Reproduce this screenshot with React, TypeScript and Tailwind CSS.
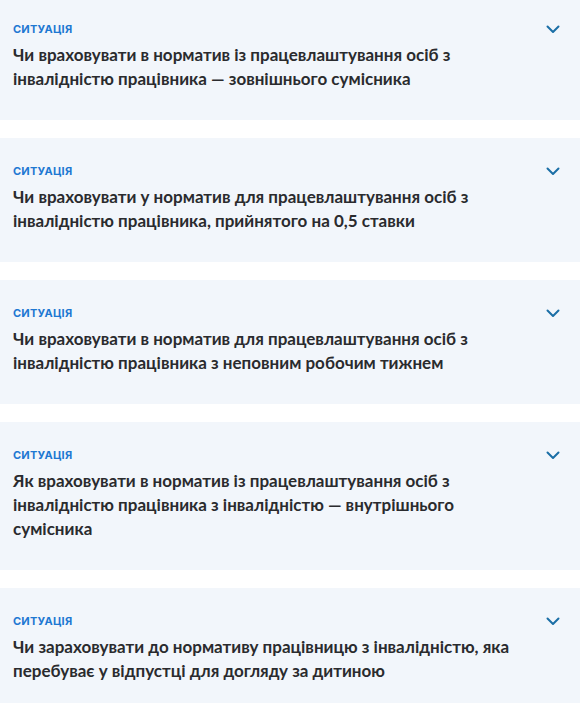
import React from 'react';

const ITEMS = [
  'Чи враховувати в норматив із працевлаштування осіб з інвалідністю працівника — зовнішнього сумісника',
  'Чи враховувати у норматив для працевлаштування осіб з інвалідністю працівника, прийнятого на 0,5 ставки',
  'Чи враховувати в норматив для працевлаштування осіб з інвалідністю працівника з неповним робочим тижнем',
  'Як враховувати в норматив із працевлаштування осіб з інвалідністю працівника з інвалідністю — внутрішнього сумісника',
  'Чи зараховувати до нормативу працівницю з інвалідністю, яка перебуває у відпустці для догляду за дитиною',
];

const Chevron = () => (
  <svg width="14" height="9" viewBox="0 0 14 9" fill="none" className="mt-[1px]">
    <path d="M1.5 1.5 7 7l5.5-5.5" stroke="#1b6fa6" strokeWidth="2" strokeLinecap="round" strokeLinejoin="round" />
  </svg>
);

const App: React.FC = () => {
  return (
    <div className="w-[580px] bg-white flex flex-col gap-[18px] -mt-[4px] font-['Inter',sans-serif]">
      {ITEMS.map((title, i) => (
        <div key={i} className="bg-[#f2f6fb] pl-[13px] pr-[20px] pt-[26px] pb-[29px]">
          <div className="flex items-center justify-between">
            <span className="text-[11px] leading-[14px] font-bold text-[#1e78d2] tracking-[0.02em]">СИТУАЦІЯ</span>
            <Chevron />
          </div>
          <p className="mt-[7px] pr-[45px] text-[17px] leading-[24px] font-bold text-[#2a2b2e] font-['Lato',sans-serif]">{title}</p>
        </div>
      ))}
    </div>
  );
};

export default App;
